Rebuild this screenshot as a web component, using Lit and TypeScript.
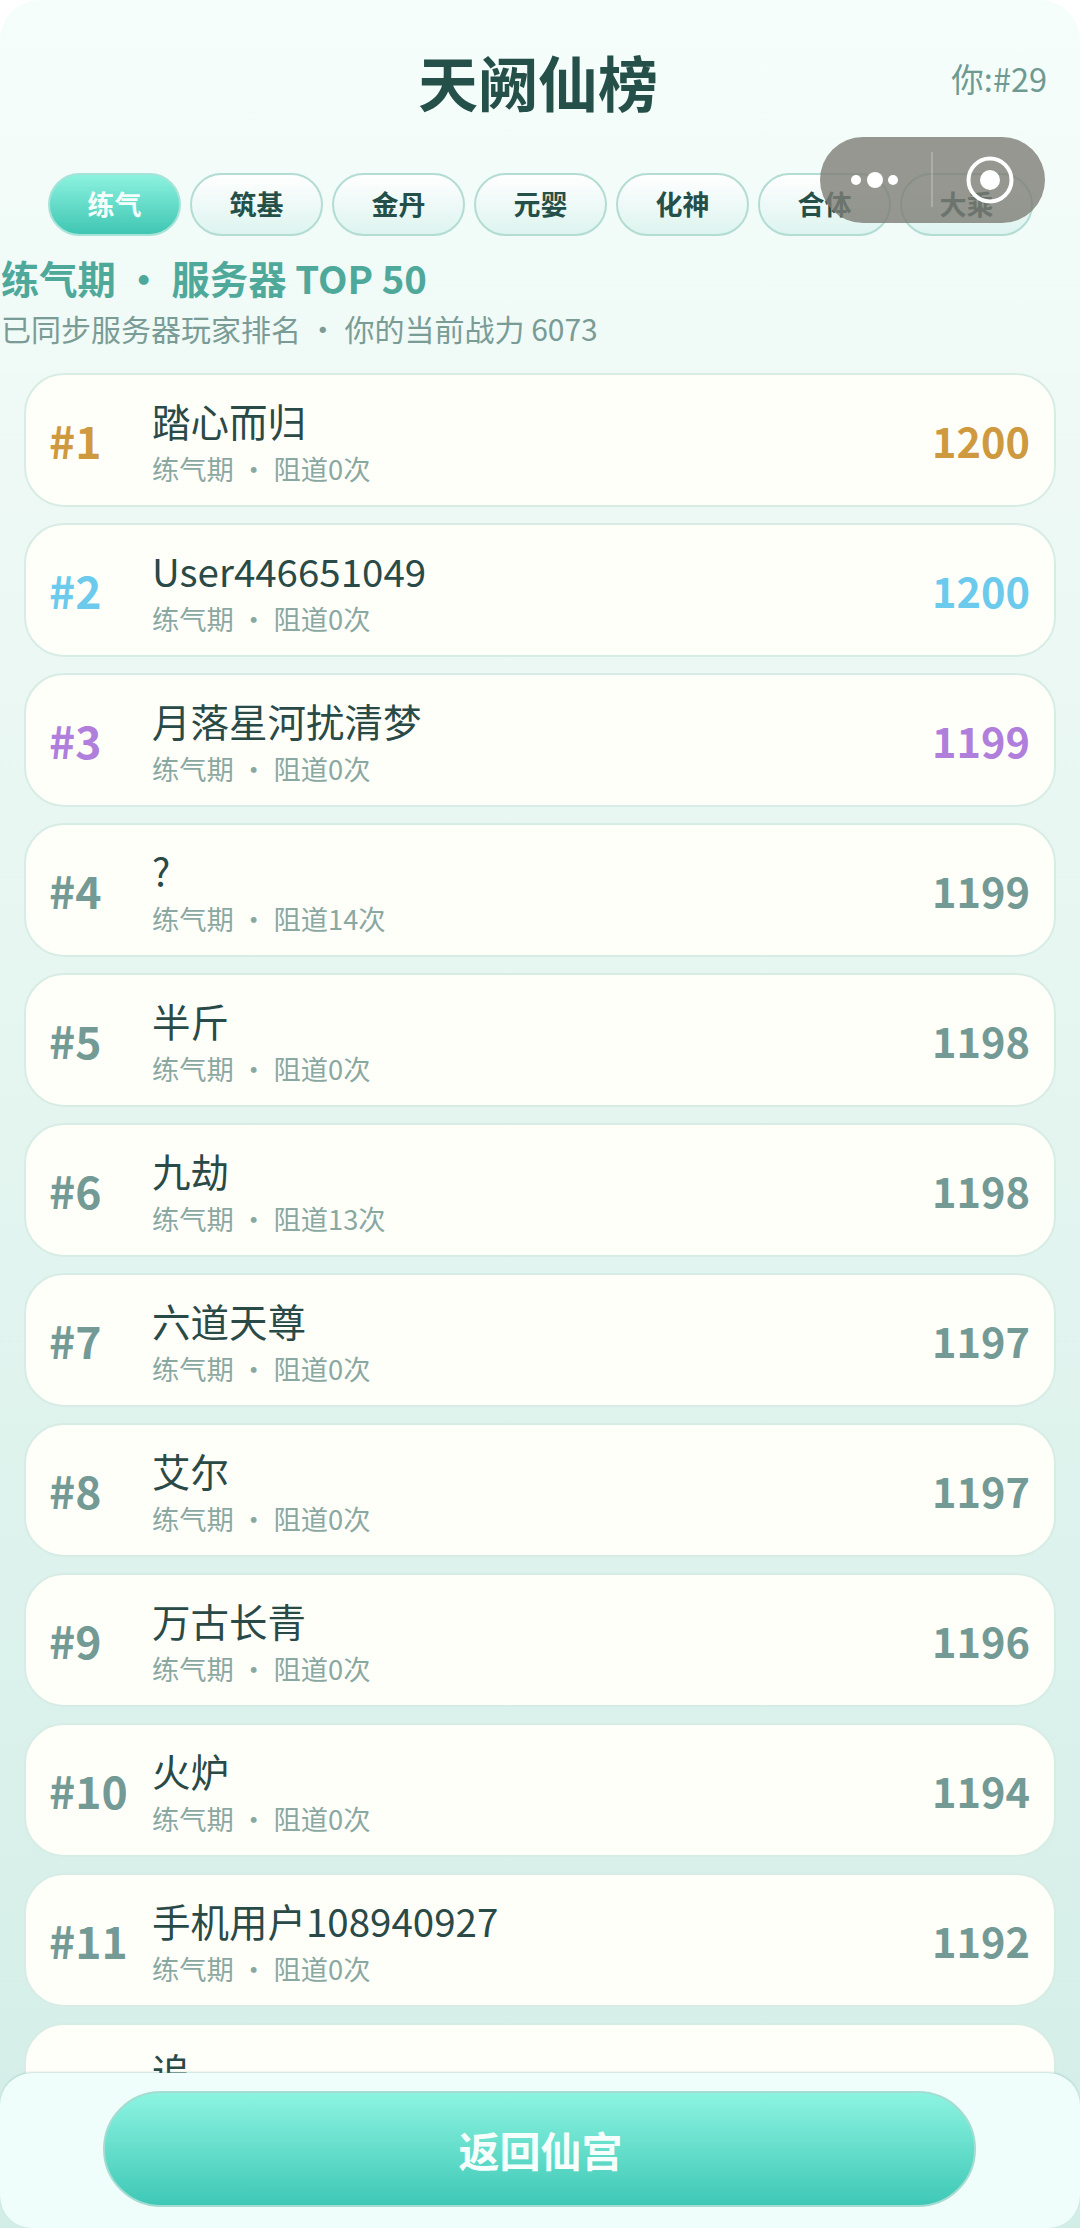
import { LitElement, html, css } from "lit";
import { customElement } from "lit/decorators.js";

const TABS = ["练气", "筑基", "金丹", "元婴", "化神", "合体", "大乘"];
const ROWS: [string, number, number][] = [
  ["踏心而归", 0, 1200],
  ["User446651049", 0, 1200],
  ["月落星河扰清梦", 0, 1199],
  ["?", 14, 1199],
  ["半斤", 0, 1198],
  ["九劫", 13, 1198],
  ["六道天尊", 0, 1197],
  ["艾尔", 0, 1197],
  ["万古长青", 0, 1196],
  ["火炉", 0, 1194],
  ["手机用户108940927", 0, 1192],
  ["追", 0, 1190],
];

@customElement("app-root")
export class AppRoot extends LitElement {
  static styles = css`
    :host {
      display: block;
      width: 1080px;
      height: 2228px;
      background: #fff;
      font-family: "Noto Sans CJK SC", "Noto Sans", sans-serif;
    }
    .page {
      position: relative;
      height: 2228px;
      box-sizing: border-box;
      display: flex;
      flex-direction: column;
      overflow: hidden;
      border-radius: 40px 40px 0 0;
      background: linear-gradient(180deg, #f5fefb 0%, #f0faf6 15%, #d3eee7 100%);
    }
    .head {
      display: grid;
      grid-template-columns: 1fr auto 1fr;
      align-items: center;
      height: 165px;
      padding: 0 33px 0 29px;
      box-sizing: border-box;
      flex: none;
    }
    .title {
      font-size: 60px;
      line-height: 60px;
      font-weight: 700;
      color: #25504a;
      grid-column: 2;
      margin-top: -3px;
    }
    .me {
      font-size: 32.5px;
      line-height: 40px;
      color: #6f9a92;
      justify-self: end;
      margin-top: -10px;
    }
    .tabs {
      display: flex;
      gap: 8.9px;
      padding: 8px 0 0 48px;
      flex: none;
    }
    .tab {
      width: 133.1px;
      height: 63px;
      box-sizing: border-box;
      border-radius: 32px;
      border: 2px solid #b3dcd3;
      background: linear-gradient(180deg, #ffffff 0%, #ddf4ef 100%);
      color: #25504a;
      font-size: 27px;
      font-weight: 700;
      display: flex;
      align-items: center;
      justify-content: center;
      padding-bottom: 2px;
    }
    .tab.on {
      background: linear-gradient(180deg, #8cf2df 0%, #3fc6b3 100%);
      border-color: #a6e3d8;
      color: #f4fffb;
    }
    .info {
      flex: none;
      padding: 17px 0 0 1px;
    }
    .info h2 {
      margin: 0;
      font-size: 38.3px;
      line-height: 50px;
      font-weight: 700;
      color: #4fa99b;
      white-space: pre;
    }
    .info p {
      margin: 0;
      font-size: 30px;
      line-height: 50px;
      color: #7a9c96;
      white-space: pre;
    }
    .list {
      flex: 1;
      min-height: 0;
      overflow: hidden;
      padding: 20px 24px 0;
      display: flex;
      flex-direction: column;
      gap: 16px;
    }
    .row {
      flex: none;
      height: 134px;
      box-sizing: border-box;
      border-radius: 40px;
      border: 2px solid #d8ece6;
      background: #fffffa;
      display: flex;
      align-items: center;
      padding: 0 24px 0 23px;
    }
    .rank {
      width: 103px;
      flex: none;
      font-size: 44.5px;
      font-weight: 700;
      color: #739a94;
      margin-top: -1px;
    }
    .rank.r1, .score.r1 { color: #cf9a3f; }
    .rank.r2, .score.r2 { color: #6ccbec; }
    .rank.r3, .score.r3 { color: #b07fdc; }
    .mid {
      flex: 1;
      min-width: 0;
      margin-top: 6px;
    }
    .name {
      font-size: 38.5px;
      line-height: 50px;
      color: #2a4a47;
    }
    .sub {
      font-size: 27.3px;
      line-height: 46px;
      color: #8aa8a2;
      white-space: pre;
    }
    .score {
      font-size: 41.5px;
      font-weight: 700;
      color: #739a94;
      margin-top: -1px;
    }
    .foot {
      flex: none;
      height: 155px;
      box-sizing: border-box;
      border-radius: 32px;
      box-shadow: 0 -1px 2px rgba(80, 150, 140, 0.3);
      background: #effefa;
      padding: 18px 104px 0 103px;
      position: relative;
    }
    .back {
      height: 116px;
      box-sizing: border-box;
      border-radius: 58px;
      border: 2px solid #a4dcd1;
      background: linear-gradient(180deg, #8cf4e1 0%, #3fc8b6 100%);
      color: #f6fffc;
      font-size: 41px;
      font-weight: 700;
      display: flex;
      align-items: center;
      justify-content: center;
      padding-left: 2px;
    }
    .capsule {
      position: absolute;
      left: 820px;
      top: 137px;
      width: 225px;
      height: 86px;
      border-radius: 43px;
      background: rgba(125, 125, 118, 0.8);
    }
    .capsule svg { display: block; }
  `;

  render() {
    return html`
      <div class="page">
        <div class="head">
          <div class="title">天阙仙榜</div>
          <div class="me">你:#29</div>
        </div>
        <div class="tabs">
          ${TABS.map((t, i) => html`<div class="tab ${i === 0 ? "on" : ""}">${t}</div>`)}
        </div>
        <div class="info">
          <h2>练气期 · 服务器 TOP 50</h2>
          <p>已同步服务器玩家排名 · 你的当前战力 6073</p>
        </div>
        <div class="list">
          ${ROWS.map(
            ([n, d, s], i) => html`
              <div class="row">
                <div class="rank r${i + 1}">#${i + 1}</div>
                <div class="mid">
                  <div class="name">${n}</div>
                  <div class="sub">练气期 · 阻道${d}次</div>
                </div>
                <div class="score r${i + 1}">${s}</div>
              </div>
            `
          )}
        </div>
        <div class="foot"><div class="back">返回仙宫</div></div>
        <div class="capsule">
          <svg width="225" height="86" viewBox="0 0 225 86">
            <circle cx="36" cy="43" r="5" fill="#fff" />
            <circle cx="55" cy="43" r="8" fill="#fff" />
            <circle cx="73" cy="43" r="5" fill="#fff" />
            <line x1="112" y1="15" x2="112" y2="70" stroke="#fff" stroke-opacity="0.3" stroke-width="1.5" />
            <circle cx="170" cy="43" r="21.5" fill="none" stroke="#fff" stroke-width="4" />
            <circle cx="170" cy="43" r="10" fill="#fff" />
          </svg>
        </div>
      </div>
    `;
  }
}
